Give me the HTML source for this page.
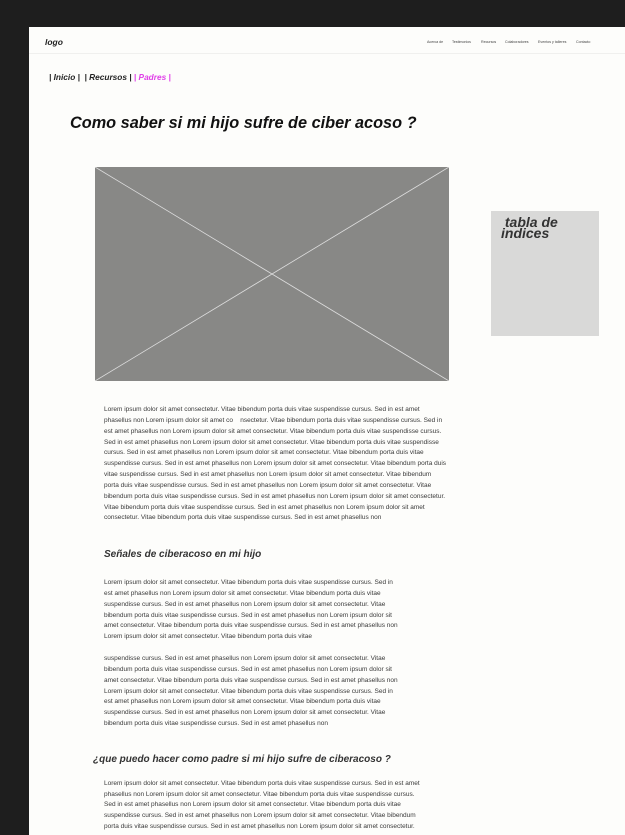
<!DOCTYPE html>
<html><head><meta charset="utf-8"><style>
body{margin:0;width:625px;height:835px;background:#1e1e1e;overflow:hidden;font-family:"Liberation Sans",sans-serif}
#pg{position:absolute;left:29px;top:27px;width:596px;height:808px;background:#fdfdfb}
.a{position:absolute;white-space:nowrap}
.nav{top:13px;font-size:3.6px;color:#444}
.t{position:absolute;white-space:nowrap;font-size:6.5px;color:#3a3a3a;left:75px}
</style></head><body>
<div id="pg">
<div class="a" style="left:16px;top:10px;font-size:8.5px;font-weight:bold;font-style:italic;color:#222">logo</div>
<div class="a nav" style="left:398px">Acerca de</div>
<div class="a nav" style="left:423px">Testimonios</div>
<div class="a nav" style="left:452px">Recursos</div>
<div class="a nav" style="left:476px">Colaboradores</div>
<div class="a nav" style="left:509px">Eventos y talleres</div>
<div class="a nav" style="left:547px">Contacto</div>
<div class="a" style="left:0;top:26px;width:596px;border-top:1px solid #f0f0ee"></div>
<div class="a" style="left:20px;top:45px;font-size:8.3px;font-weight:bold;font-style:italic;color:#222">| Inicio | &nbsp;| Recursos | <span style="color:#e040e8">| Padres |</span></div>
<div class="a" style="left:41px;top:87px;font-size:16.3px;font-weight:bold;font-style:italic;color:#111">Como saber si mi hijo sufre de ciber acoso ?</div>
<svg class="a" style="left:66px;top:140px" width="354" height="214"><rect x="0" y="0" width="354" height="214" fill="#888886"/><line x1="0" y1="0" x2="354" y2="214" stroke="#ddd" stroke-width="0.8"/><line x1="354" y1="0" x2="0" y2="214" stroke="#ddd" stroke-width="0.8"/></svg>
<div class="a" style="left:462px;top:184px;width:108px;height:125px;background:#d9d9d8"></div>
<div class="a" style="left:472px;top:190px;font-size:14px;line-height:11px;font-weight:bold;font-style:italic;color:#333">&nbsp;tabla de<br>indices</div>

<div class="t" style="top:379px">Lorem ipsum dolor sit amet consectetur. Vitae bibendum porta duis vitae suspendisse cursus. Sed in est amet</div>
<div class="t" style="top:390px">phasellus non Lorem ipsum dolor sit amet co &nbsp;&nbsp; nsectetur. Vitae bibendum porta duis vitae suspendisse cursus. Sed in</div>
<div class="t" style="top:401px">est amet phasellus non Lorem ipsum dolor sit amet consectetur. Vitae bibendum porta duis vitae suspendisse cursus.</div>
<div class="t" style="top:412px">Sed in est amet phasellus non Lorem ipsum dolor sit amet consectetur. Vitae bibendum porta duis vitae suspendisse</div>
<div class="t" style="top:422px">cursus. Sed in est amet phasellus non Lorem ipsum dolor sit amet consectetur. Vitae bibendum porta duis vitae</div>
<div class="t" style="top:433px">suspendisse cursus. Sed in est amet phasellus non Lorem ipsum dolor sit amet consectetur. Vitae bibendum porta duis</div>
<div class="t" style="top:444px">vitae suspendisse cursus. Sed in est amet phasellus non Lorem ipsum dolor sit amet consectetur. Vitae bibendum</div>
<div class="t" style="top:455px">porta duis vitae suspendisse cursus. Sed in est amet phasellus non Lorem ipsum dolor sit amet consectetur. Vitae</div>
<div class="t" style="top:466px">bibendum porta duis vitae suspendisse cursus. Sed in est amet phasellus non Lorem ipsum dolor sit amet consectetur.</div>
<div class="t" style="top:477px">Vitae bibendum porta duis vitae suspendisse cursus. Sed in est amet phasellus non Lorem ipsum dolor sit amet</div>
<div class="t" style="top:487px">consectetur. Vitae bibendum porta duis vitae suspendisse cursus. Sed in est amet phasellus non</div>

<div class="a" style="left:75px;top:522px;font-size:10px;font-weight:bold;font-style:italic;color:#333">Señales de ciberacoso en mi hijo</div>
<div class="t" style="top:552px">Lorem ipsum dolor sit amet consectetur. Vitae bibendum porta duis vitae suspendisse cursus. Sed in</div>
<div class="t" style="top:563px">est amet phasellus non Lorem ipsum dolor sit amet consectetur. Vitae bibendum porta duis vitae</div>
<div class="t" style="top:574px">suspendisse cursus. Sed in est amet phasellus non Lorem ipsum dolor sit amet consectetur. Vitae</div>
<div class="t" style="top:585px">bibendum porta duis vitae suspendisse cursus. Sed in est amet phasellus non Lorem ipsum dolor sit</div>
<div class="t" style="top:595px">amet consectetur. Vitae bibendum porta duis vitae suspendisse cursus. Sed in est amet phasellus non</div>
<div class="t" style="top:606px">Lorem ipsum dolor sit amet consectetur. Vitae bibendum porta duis vitae</div>

<div class="t" style="top:628px">suspendisse cursus. Sed in est amet phasellus non Lorem ipsum dolor sit amet consectetur. Vitae</div>
<div class="t" style="top:639px">bibendum porta duis vitae suspendisse cursus. Sed in est amet phasellus non Lorem ipsum dolor sit</div>
<div class="t" style="top:650px">amet consectetur. Vitae bibendum porta duis vitae suspendisse cursus. Sed in est amet phasellus non</div>
<div class="t" style="top:661px">Lorem ipsum dolor sit amet consectetur. Vitae bibendum porta duis vitae suspendisse cursus. Sed in</div>
<div class="t" style="top:671px">est amet phasellus non Lorem ipsum dolor sit amet consectetur. Vitae bibendum porta duis vitae</div>
<div class="t" style="top:682px">suspendisse cursus. Sed in est amet phasellus non Lorem ipsum dolor sit amet consectetur. Vitae</div>
<div class="t" style="top:693px">bibendum porta duis vitae suspendisse cursus. Sed in est amet phasellus non</div>

<div class="a" style="left:64px;top:727px;font-size:10px;font-weight:bold;font-style:italic;color:#333">¿que puedo hacer como padre si mi hijo sufre de ciberacoso ?</div>
<div class="t" style="top:753px">Lorem ipsum dolor sit amet consectetur. Vitae bibendum porta duis vitae suspendisse cursus. Sed in est amet</div>
<div class="t" style="top:764px">phasellus non Lorem ipsum dolor sit amet consectetur. Vitae bibendum porta duis vitae suspendisse cursus.</div>
<div class="t" style="top:774px">Sed in est amet phasellus non Lorem ipsum dolor sit amet consectetur. Vitae bibendum porta duis vitae</div>
<div class="t" style="top:785px">suspendisse cursus. Sed in est amet phasellus non Lorem ipsum dolor sit amet consectetur. Vitae bibendum</div>
<div class="t" style="top:796px">porta duis vitae suspendisse cursus. Sed in est amet phasellus non Lorem ipsum dolor sit amet consectetur.</div>
</div>
</body></html>
